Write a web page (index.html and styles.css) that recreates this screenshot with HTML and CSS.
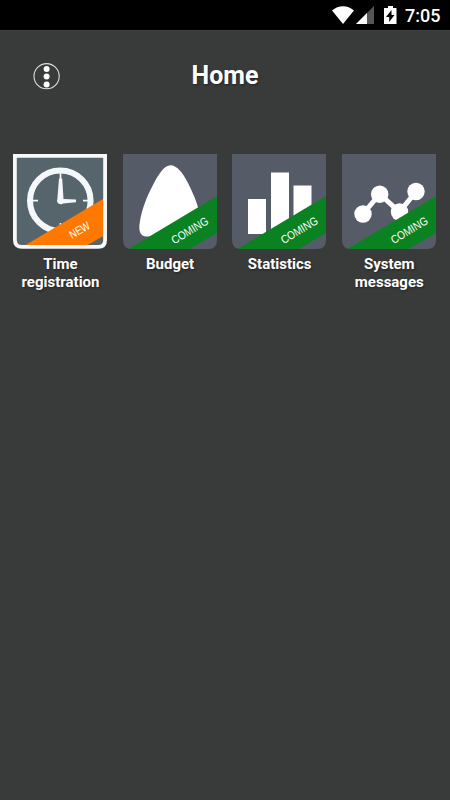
FILE: index.html
```html
<!DOCTYPE html>
<html lang="en">
<head>
<meta charset="utf-8">
<title>Home</title>
<link rel="stylesheet" href="styles.css">
</head>
<body>
<div class="status">
  <svg class="status-icons" width="80" height="30" viewBox="0 0 80 30">
    <path fill="#fff" d="M2 10.600C8.500 4.900 17.500 4.900 24 10.600L13 24Z"/>
    <path fill="#555" d="M44 6V24H26Z"/>
    <path fill="#fff" d="M37 13V24H26Z"/>
    <path fill="#fff" d="M58 6h5v2h3.500v16h-12.500V8h4z"/>
    <path fill="#000" d="M61.500 10l-5.500 7h3.200v5l5.300-7h-3z"/>
  </svg>
  <span class="time">7:05</span>
</div>
<header class="header">
  <button class="menu" aria-label="Menu">
    <svg width="28" height="28" viewBox="0 0 28 28">
      <circle cx="13.600" cy="14.200" r="12.600" fill="none" stroke="#ddd" stroke-width="1.100"/>
      <g fill="#fff"><circle cx="13.600" cy="7" r="3"/><circle cx="13.600" cy="14.400" r="3"/><circle cx="13.600" cy="22.400" r="3"/></g>
    </svg>
  </button>
  <h1>Home</h1>
</header>
<main class="grid">
  <div class="item">
    <svg class="tile" viewBox="0 0 94 95">
      <path fill="#56646c" d="M2 2h90v84q0 7-7 7H9q-7 0-7-7z"/>
      <circle cx="47.300" cy="46.800" r="30.300" fill="none" stroke="#f5f8fb" stroke-width="6"/>
      <path fill="none" stroke="#f5f8fb" stroke-width="1.700" d="M47.500 18v7M20 46.700h5M70 46.700h5M47.500 69v8"/>
      <path fill="#f5f8fb" d="M46 24.500h3.200l1.300 20.500 12.500 .6v2.600l-13 1.200a3.600 3.600 0 0 1-5.700-4z"/>
      <path fill="#ff7900" d="M11 92L92 43.700V81L73 92z"/>
      <path fill="none" stroke="#f8f8f8" stroke-width="3.800" d="M1.900 1.900h90.200v84q0 7-7 7H8.900q-7 0-7-7z"/>
      <text class="tag" x="66.700" y="79.700" textLength="22" lengthAdjust="spacingAndGlyphs" transform="rotate(-30.500 67.200 76.200)">NEW</text>
    </svg>
    <span>Time<br>registration</span>
  </div>
  <div class="item">
    <svg class="tile" viewBox="0 0 94 95">
      <path class="plate" d="M0 0h94v86q0 9-9 9H9q-9 0-9-9z"/>
      <path fill="#fff" d="M47.500 11.200C54 11.200 60 19 65 29C70 39 73.500 47 76 57L31 82Q28 82.500 24 82.500C16 82.500 15.500 75 17 67C19 55 24 42 30 31C35.500 20 41.500 11.200 47.500 11.200z"/>
      <path class="ribbon" d="M5.500 95L94 42V79L66.500 95z"/>
      <text class="tag" x="66.700" y="80.200" textLength="41" lengthAdjust="spacingAndGlyphs" transform="rotate(-31 67.200 76.200)">COMING</text>
    </svg>
    <span>Budget</span>
  </div>
  <div class="item">
    <svg class="tile" viewBox="0 0 94 95">
      <path class="plate" d="M0 0h94v86q0 9-9 9H9q-9 0-9-9z"/>
      <path fill="#fff" d="M16 45h18v35H16zM39 18.500h18V80H39zM61.500 31.500h18v40h-18z"/>
      <path class="ribbon" d="M5.500 95L94 42V79L66.500 95z"/>
      <text class="tag" x="67.200" y="80.200" textLength="41" lengthAdjust="spacingAndGlyphs" transform="rotate(-31 67.200 76.200)">COMING</text>
    </svg>
    <span>Statistics</span>
  </div>
  <div class="item">
    <svg class="tile" viewBox="0 0 94 95">
      <path class="plate" d="M0 0h94v86q0 9-9 9H9q-9 0-9-9z"/>
      <path fill="none" stroke="#fff" stroke-width="5" d="M21 60L37.700 40 57.500 58 74 37.500"/>
      <g fill="#fff"><circle cx="21" cy="60" r="8.700"/><circle cx="37.700" cy="40.200" r="8.700"/><circle cx="57.500" cy="58" r="8.700"/><circle cx="74" cy="37.500" r="8.700"/></g>
      <path class="ribbon" d="M5.500 95L94 42V79L66.500 95z"/>
      <text class="tag" x="67.200" y="80.200" textLength="41" lengthAdjust="spacingAndGlyphs" transform="rotate(-31 67.200 76.200)">COMING</text>
    </svg>
    <span>System<br>messages</span>
  </div>
</main>
</body>
</html>
```
FILE: styles.css
```css
* { box-sizing: border-box; }
body {
  margin: 0;
  min-height: 800px;
  background: #393b3a;
  color: #fff;
  font-family: Roboto, sans-serif;
}
.status {
  height: 30px;
  background: #000;
  display: flex;
  justify-content: flex-end;
  padding-right: 10px;
}
.status-icons { display: block; margin-right: -5px; }
.time { font-size: 18px; font-weight: 500; line-height: 32px; width: 35px; white-space: nowrap; }
.header {
  height: 123.500px;
  display: grid;
  grid-template-columns: 1fr auto 1fr;
  align-items: start;
  border-top: 1px solid #424242;
}
.menu {
  width: 28px;
  height: 28px;
  margin: 31px 0 0 33px;
  padding: 0;
  border: 0;
  background: none;
}
.menu svg { display: block; }
h1 {
  margin: 30px 0 0;
  font-size: 25px;
  line-height: 30px;
  font-weight: 700;
  text-shadow: 1px 1px 2px #222;
}
.grid {
  display: grid;
  grid-template-columns: repeat(4, 94px);
  column-gap: 15.600px;
  padding-left: 13px;
}
.item { display: flex; flex-direction: column; align-items: center; }
.item span {
  margin: 6px -1px 0 0;
  font-size: 15px;
  line-height: 18px;
  font-weight: 700;
  text-align: center;
  white-space: nowrap;
  text-shadow: 1px 1px 2px #222;
}
.tile { display: block; width: 94px; height: 95px; }
.plate { fill: #555c67; }
.ribbon { fill: #0b8221; }
.tag { fill: #fff; font: 11.500px "Liberation Sans", sans-serif; text-anchor: middle; }
```
